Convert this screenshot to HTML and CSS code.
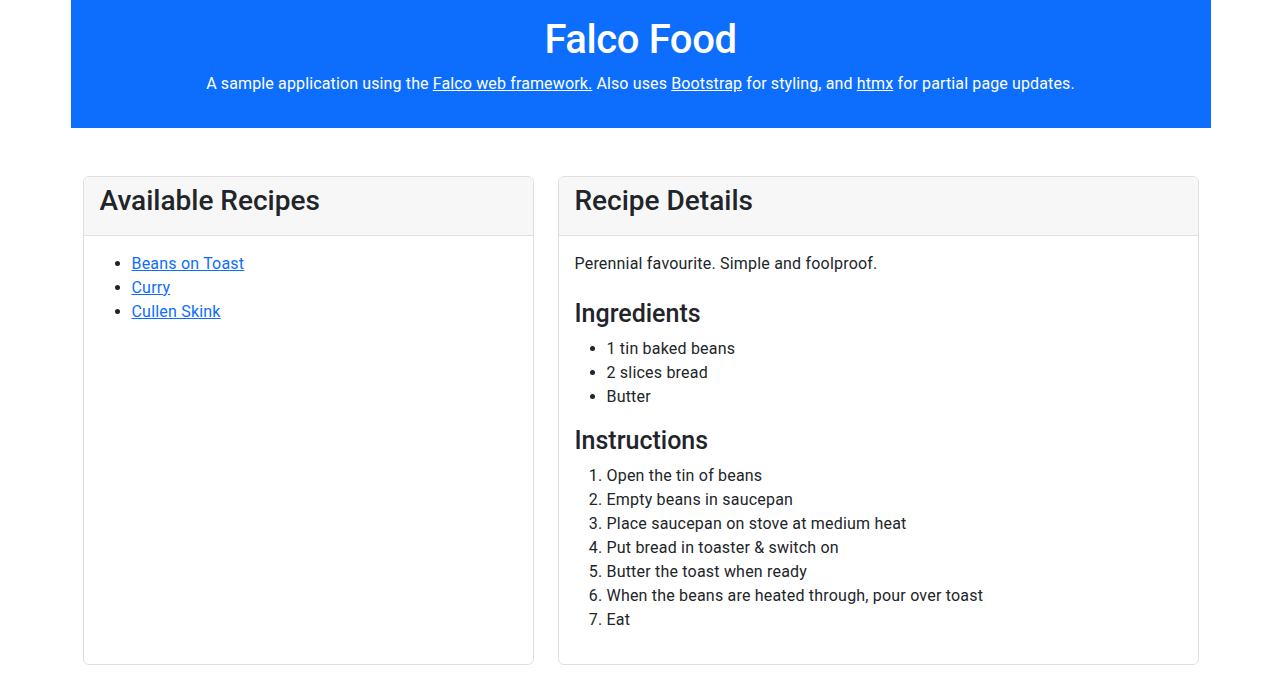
FILE: index.html
```html
<!DOCTYPE html>
<html lang="en">
<head>
<meta charset="utf-8">
<title>Falco Food</title>
<link rel="stylesheet" href="styles.css">
</head>
<body>
<div class="container">
  <header class="hero">
    <h1 class="hero-title">Falco Food</h1>
    <p class="hero-lead">A sample application using the <a href="#">Falco web framework.</a> Also uses <a href="#">Bootstrap</a> for styling, and <a href="#">htmx</a> for partial page updates.</p>
  </header>
  <main class="row">
    <section class="card">
      <div class="card-header"><h2 class="card-title">Available Recipes</h2></div>
      <div class="card-body">
        <ul class="list">
          <li><a href="#">Beans on Toast</a></li>
          <li><a href="#">Curry</a></li>
          <li><a href="#">Cullen Skink</a></li>
        </ul>
      </div>
    </section>
    <section class="card">
      <div class="card-header"><h2 class="card-title">Recipe Details</h2></div>
      <div class="card-body">
        <p class="desc">Perennial favourite. Simple and foolproof.</p>
        <h3 class="sub">Ingredients</h3>
        <ul class="list">
          <li>1 tin baked beans</li>
          <li>2 slices bread</li>
          <li>Butter</li>
        </ul>
        <h3 class="sub">Instructions</h3>
        <ol class="list">
          <li>Open the tin of beans</li>
          <li>Empty beans in saucepan</li>
          <li>Place saucepan on stove at medium heat</li>
          <li>Put bread in toaster &amp; switch on</li>
          <li>Butter the toast when ready</li>
          <li>When the beans are heated through, pour over toast</li>
          <li>Eat</li>
        </ol>
      </div>
    </section>
  </main>
</div>
</body>
</html>
```
FILE: styles.css
```css
html, body {
  margin: 0;
  padding: 0;
  background: #fff;
}
body {
  font-family: Roboto, "Liberation Sans", sans-serif;
  font-size: 16px;
  line-height: 1.5;
  color: #212529;
  letter-spacing: 0.2px;
}
.container {
  width: 1140px;
  margin: 0 auto;
}
.hero {
  background: #0d6efd;
  color: #fff;
  text-align: center;
  padding: 16px 0;
}
.hero-title {
  font-size: 40px;
  font-weight: 500;
  line-height: 48px;
  letter-spacing: -0.4px;
  margin: 0 0 8px;
}
.hero-lead {
  margin: 0 0 16px;
  letter-spacing: 0.13px;
}
.hero-lead a {
  color: #fff;
  text-decoration: underline;
}
.row {
  display: grid;
  grid-template-columns: 451px 641px;
  gap: 24px;
  padding: 0 12px;
  margin-top: 48px;
}
.card {
  border: 1px solid #dfdfdf;
  border-radius: 6px;
  background: #fff;
}
.card-header {
  background: #f7f7f7;
  border-bottom: 1px solid #dfdfdf;
  border-radius: 5px 5px 0 0;
  padding: 6px 16px 16px;
}
.card-title {
  font-size: 28px;
  font-weight: 500;
  line-height: 36px;
  letter-spacing: 0;
  margin: 0;
}
.card-body {
  padding: 16px;
}
.card-body a {
  color: #0d6efd;
  text-decoration: underline;
}
.desc {
  margin: 0 0 22px;
}
.sub {
  font-size: 25px;
  font-weight: 500;
  line-height: 31px;
  letter-spacing: 0;
  margin: 0 0 8px;
}
.list {
  margin: 0 0 16px;
  padding-left: 32px;
}
```
